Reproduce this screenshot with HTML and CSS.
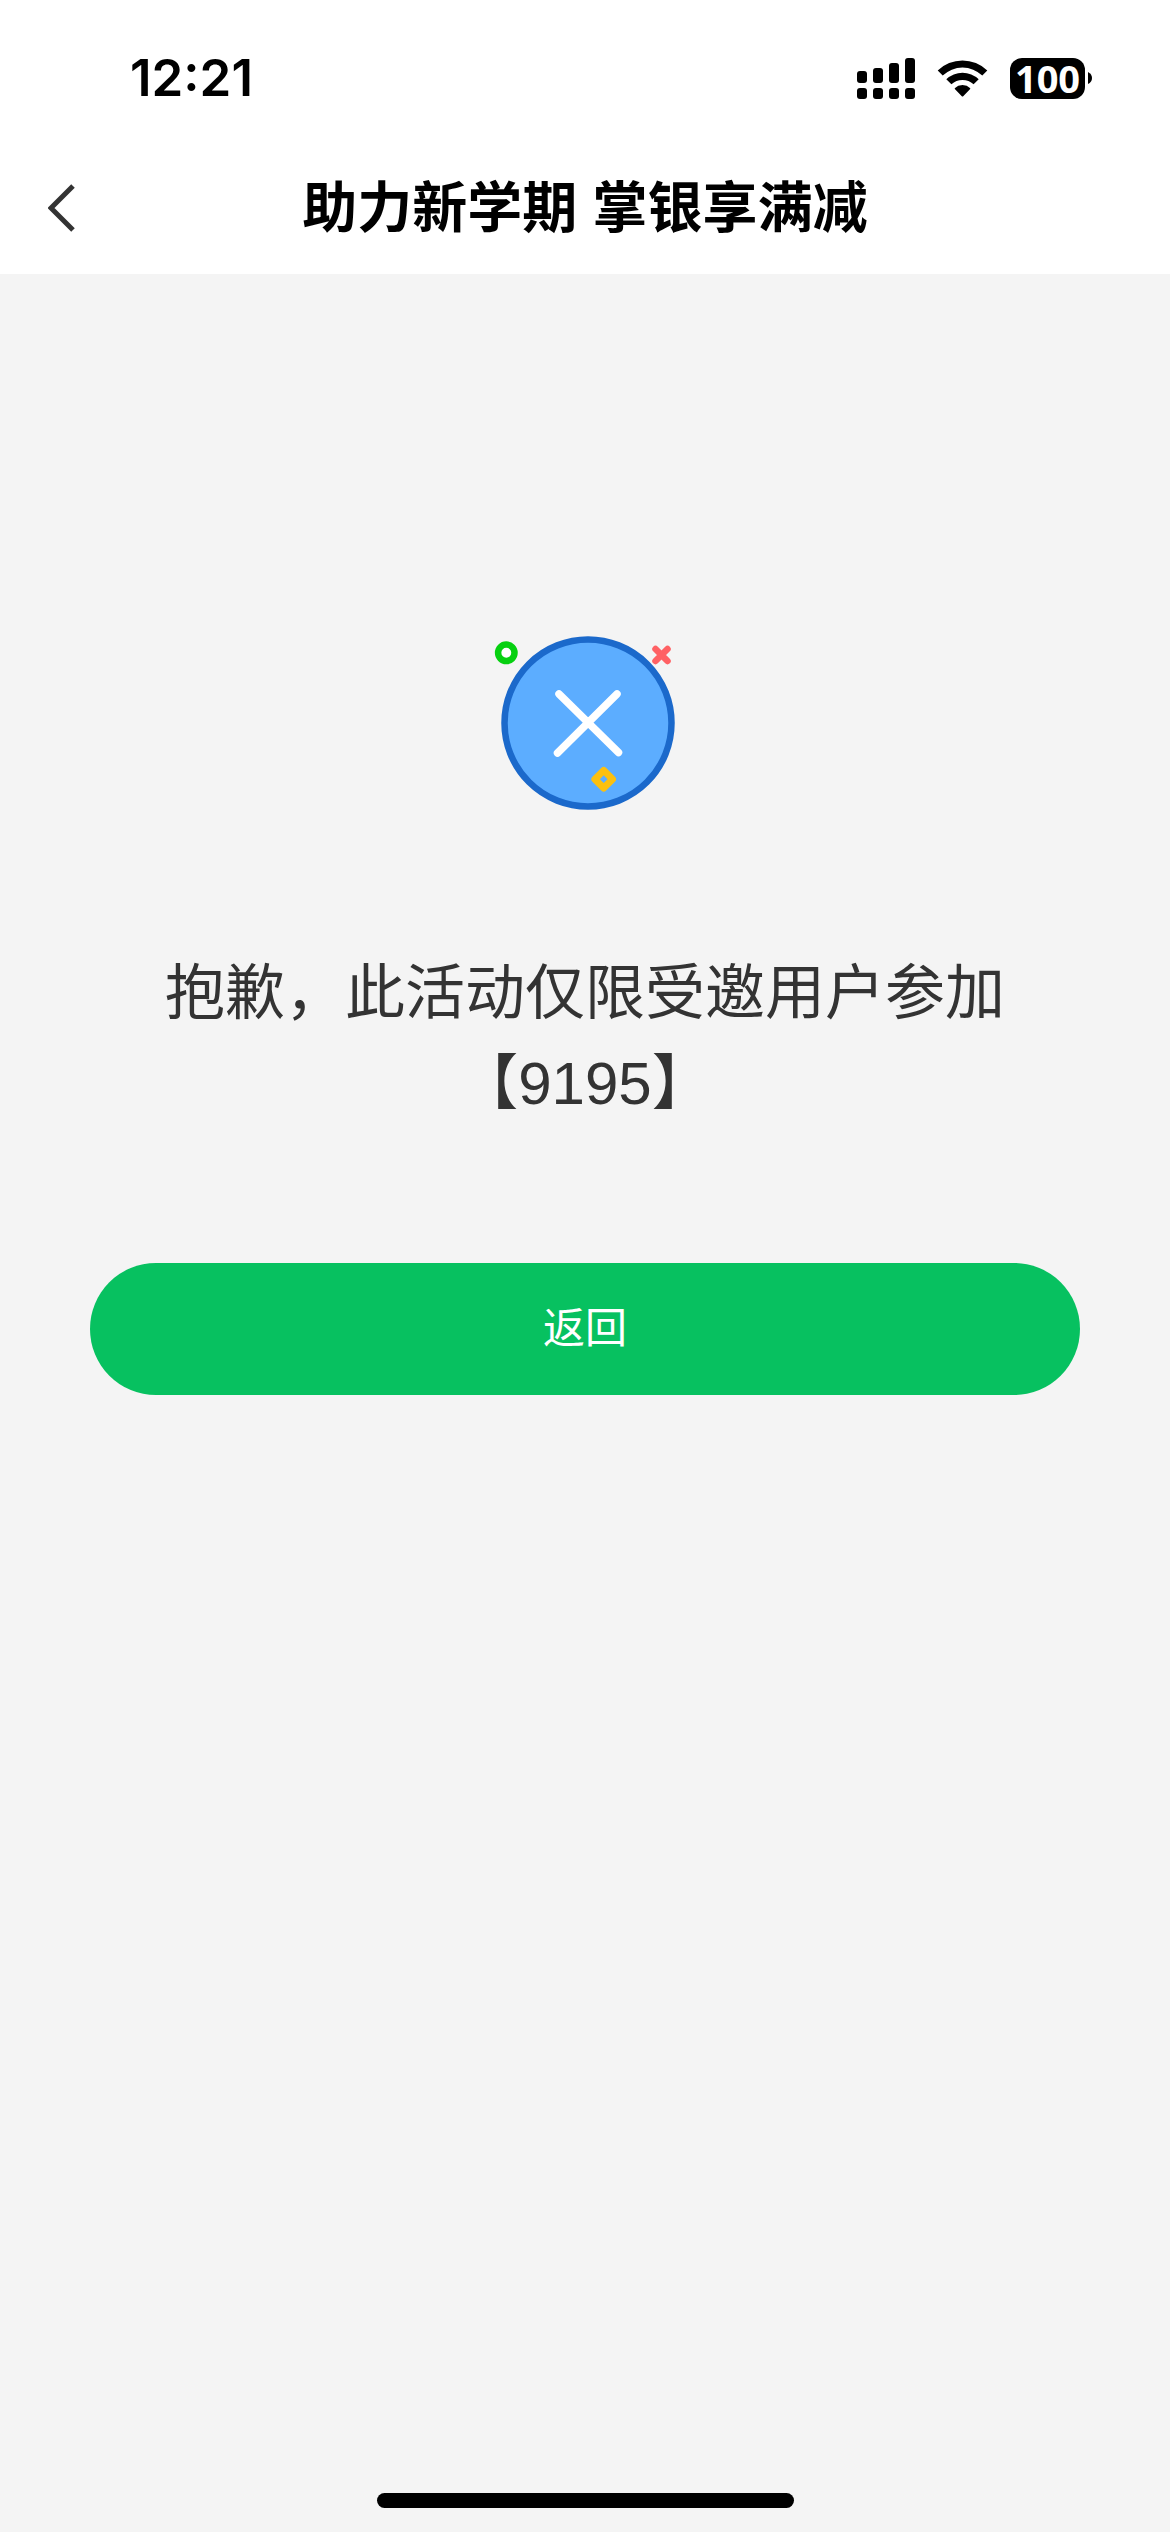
FILE: index.html
```html
<!DOCTYPE html>
<html lang="zh-CN">
<head>
  <meta charset="UTF-8">
  <meta name="viewport" content="width=device-width, initial-scale=1.0">
  <title>助力新学期 掌银享满减</title>
  <link rel="stylesheet" href="styles.css">
</head>
<body>

  <!-- Status bar -->
  <div class="status">
    <time class="status__time">12:21</time>
    <div class="status__icons">
      <svg class="status__signal" viewBox="0 0 58 41" aria-hidden="true">
        <rect x="0" y="13" width="10" height="12" rx="3"/>
        <rect x="16" y="10" width="10" height="15" rx="3"/>
        <rect x="32" y="5" width="10" height="20" rx="3"/>
        <rect x="48" y="0" width="10" height="25" rx="3"/>
        <rect x="0" y="30" width="10" height="11" rx="3"/>
        <rect x="16" y="30" width="10" height="11" rx="3"/>
        <rect x="32" y="30" width="10" height="11" rx="3"/>
        <rect x="48" y="30" width="10" height="11" rx="3"/>
      </svg>
      <svg class="status__wifi" viewBox="0 0 51 37" aria-hidden="true">
        <path d="M0.7 10.6 A35.5 35.5 0 0 1 50.3 10.6 L45.3 15.6 A28.5 28.5 0 0 0 5.7 15.6 Z"/>
        <path d="M9.3 19.2 A23.4 23.4 0 0 1 41.7 19.2 L36.6 24.3 A16.3 16.3 0 0 0 14.4 24.3 Z"/>
        <path d="M17.7 28.2 A11.4 11.4 0 0 1 33.3 28.2 Q33.3 29 32.7 29.6 L26.2 36.2 Q25.5 36.8 24.8 36.2 L18.3 29.6 Q17.7 29 17.7 28.2 Z"/>
      </svg>
      <div class="battery">
        <span class="battery__level">100</span>
        <svg class="battery__tip" viewBox="0 0 4 12" aria-hidden="true">
          <path d="M0 0 Q4 2 4 6 Q4 10 0 12 Z"/>
        </svg>
      </div>
    </div>
  </div>

  <!-- Header -->
  <header class="header">
    <button class="header__back" type="button" aria-label="返回上一页">
      <svg viewBox="0 0 27 48" aria-hidden="true">
        <path d="M25 2 L3 24 L25 46"/>
      </svg>
    </button>
    <h1 class="header__title">助力新学期 掌银享满减</h1>
  </header>

  <!-- Result -->
  <main class="result">
    <svg class="result__icon" viewBox="0 0 190 176" aria-hidden="true">
      <circle cx="98" cy="88" r="83.5" fill="#5cadff" stroke="#1b69cb" stroke-width="6.5"/>
      <path d="M69 59 L128.5 117.5 M127 59 L67.5 118" stroke="#fff" stroke-width="7.5" stroke-linecap="round"/>
      <circle cx="16.3" cy="17.8" r="8.2" fill="#fff" stroke="#06d010" stroke-width="6.5"/>
      <path d="M165.5 14 L177.5 26 M177.5 14 L165.5 26" stroke="#ff6164" stroke-width="6.5" stroke-linecap="round"/>
      <path d="M113.7 135.4 L122.5 144.2 L113.7 153 L104.9 144.2 Z" fill="#5cadff" stroke="#fcc00f" stroke-width="7" stroke-linejoin="round"/>
    </svg>
    <p class="result__text">抱歉，此活动仅限受邀用户参加<br>【9195】</p>
    <button class="result__button" type="button">返回</button>
  </main>

  <div class="home-bar"></div>

</body>
</html>
```
FILE: styles.css
```css
* {
  box-sizing: border-box;
}

body {
  display: flex;
  flex-direction: column;
  min-height: 100vh;
  margin: 0;
  background: #f4f4f4;
  color: #333;
  font-family: "Liberation Sans", "Noto Sans CJK SC", sans-serif;
}

button {
  padding: 0;
  border: none;
  background: none;
  font-family: inherit;
  cursor: pointer;
}

svg {
  display: block;
}

/* Status bar */
.status {
  display: flex;
  justify-content: space-between;
  align-items: center;
  padding: 48px 78px 34px 130px;
  background: #fff;
  color: #000;
}

.status__time {
  font-family: Inter, sans-serif;
  font-size: 51px;
  font-weight: 600;
  line-height: 60px;
}

.status__icons {
  display: flex;
  align-items: center;
  gap: 22px;
}

.status__signal {
  width: 58px;
  height: 41px;
}

.status__wifi {
  width: 51px;
  height: 37px;
}

.battery {
  display: flex;
  align-items: center;
  gap: 3px;
}

.battery__level {
  width: 75px;
  border-radius: 12px;
  background: #000;
  color: #fff;
  font-family: "Open Sans", sans-serif;
  font-size: 38px;
  font-weight: 700;
  line-height: 41px;
  text-align: center;
}

.battery__tip {
  width: 4px;
  height: 12px;
}

/* Header */
.header {
  display: grid;
  grid-template-columns: 80px 1fr 80px;
  align-items: center;
  padding: 26px 48px;
  background: #fff;
}

.header__back svg {
  width: 27px;
  height: 48px;
  fill: none;
  stroke: #333;
  stroke-width: 5;
}

.header__title {
  margin: 0;
  color: #000;
  font-size: 55px;
  font-weight: 700;
  line-height: 80px;
  text-align: center;
}

/* Result */
.result {
  flex: 1;
  display: flex;
  flex-direction: column;
  align-items: center;
  padding: 361px 90px 0;
}

.result__icon {
  width: 190px;
  height: 176px;
  fill: none;
}

.result__text {
  margin: 138px 0 134px;
  font-size: 60px;
  line-height: 90px;
  text-align: center;
}

.result__button {
  width: 100%;
  border-radius: 66px;
  background: #07c160;
  color: #fff;
  font-size: 42px;
  line-height: 132px;
}

.home-bar {
  width: 417px;
  height: 15px;
  margin: 0 auto 24px;
  border-radius: 8px;
  background: #000;
}
```
